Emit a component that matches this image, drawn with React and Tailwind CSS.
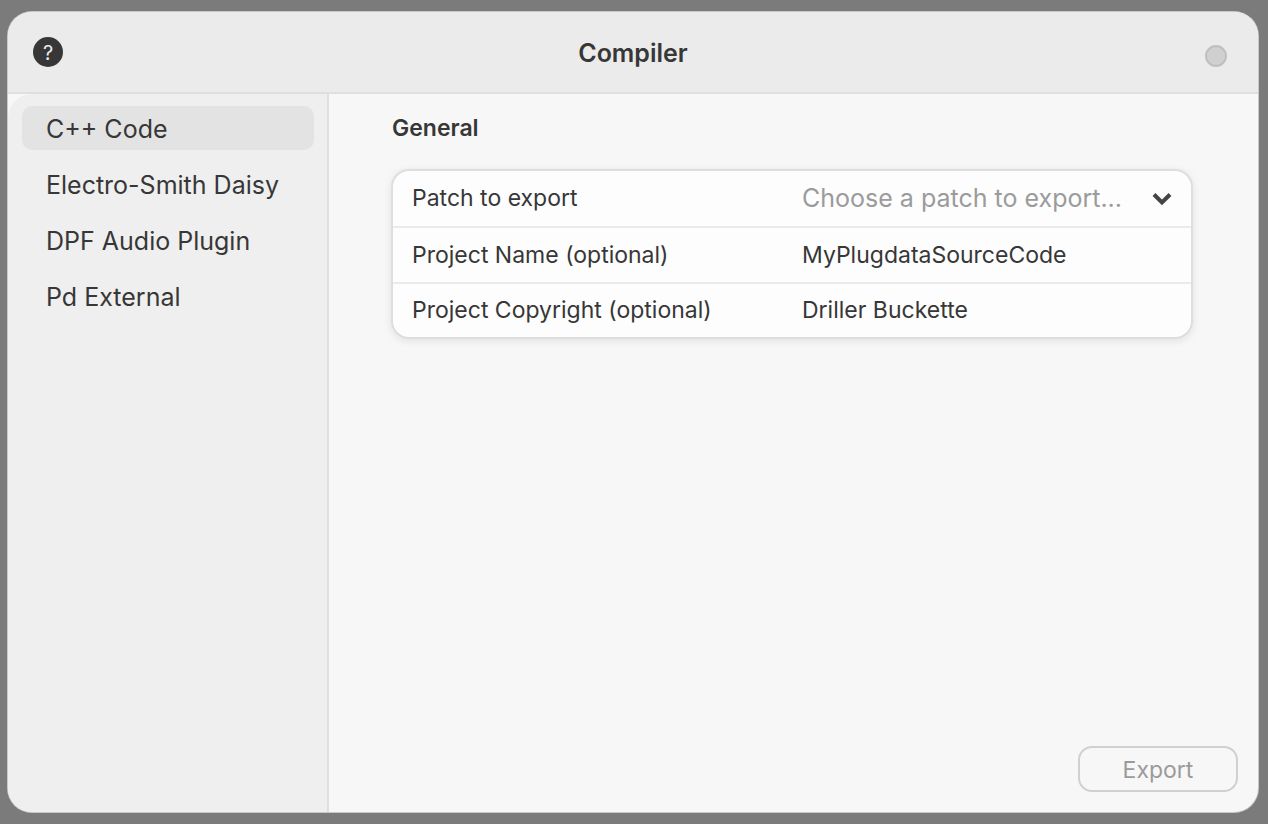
const items = ["C++ Code", "Electro-Smith Daisy", "DPF Audio Plugin", "Pd External"];

function Row({ id, label, children }) {
  return (
    <div className="grid h-14 grid-cols-[390px_1fr] items-center border-b-2 border-[#ebebeb] pl-[19px] first:h-[57px] last:h-[53px] last:border-b-0">
      <label htmlFor={id}>{label}</label>
      {children}
    </div>
  );
}

export default function App() {
  return (
    <div className="flex min-h-screen flex-col bg-[#7b7b7b] py-3 pr-[10px] pl-2 font-['Inter',sans-serif] text-[#373737]">
      <main className="flex flex-1 flex-col overflow-hidden rounded-[24px] bg-[#f7f7f7] shadow-[0_0_0_1px_#c8c8c8]">
        <header className="grid h-[82px] grid-cols-[1fr_auto_1fr] items-center border-b-2 border-[#dfdfdf] bg-[#ebebeb] px-[25px]">
          <button aria-label="Help" className="flex size-[30px] items-center justify-center rounded-full bg-[#373737] pt-0.5 text-xl text-[#ebebeb]">
            ?
          </button>
          <h1 className="pt-1 text-[25px] font-semibold">Compiler</h1>
          <button aria-label="Close" className="mt-2 mr-[6px] size-[22px] justify-self-end rounded-full border-2 border-[#bfbfbf] bg-[#d0d0d0]" />
        </header>
        <div className="flex flex-1">
          <nav className="flex w-[321px] shrink-0 flex-col gap-3 rounded-tl-[24px] border-r-2 border-[#dfdfdf] bg-[#efefef] pt-3 pr-[13px] pl-[14px]">
            {items.map((name, i) => (
              <button key={name} className={`h-11 rounded-[10px] pt-1 pl-6 text-left text-[25px] ${i === 0 ? "bg-[#e3e3e3]" : ""}`}>
                {name}
              </button>
            ))}
          </nav>
          <section className="flex flex-1 flex-col pt-[18px] pr-5 pb-5 pl-[62px]">
            <h2 className="pl-px text-[23px] leading-8 font-semibold">General</h2>
            <div className="mt-[25px] mr-[45px] overflow-hidden rounded-[18px] border-2 border-[#dedede] bg-[#fdfdfd] text-[23px] shadow-[0_2px_8px_rgba(0,0,0,0.09)]">
              <Row id="patch" label="Patch to export">
                <div className="grid items-center">
                  <select id="patch" className="col-start-1 row-start-1 w-full appearance-none bg-transparent pr-12 text-[25px] text-[#9b9b9b] outline-none">
                    <option>Choose a patch to export...</option>
                  </select>
                  <svg viewBox="0 0 20 14" className="pointer-events-none col-start-1 row-start-1 mr-[19px] h-[14px] w-5 justify-self-end" fill="none" stroke="#444444" strokeWidth="4">
                    <path d="M2 2.5 10 10.5 18 2.5" />
                  </svg>
                </div>
              </Row>
              <Row id="name" label="Project Name (optional)">
                <input id="name" defaultValue="MyPlugdataSourceCode" className="w-full bg-transparent outline-none" />
              </Row>
              <Row id="copyright" label="Project Copyright (optional)">
                <input id="copyright" defaultValue="Driller Buckette" className="w-full bg-transparent outline-none" />
              </Row>
            </div>
            <button disabled className="mt-auto h-[46px] w-40 self-end rounded-[14px] border-2 border-[#d0d0d0] pt-0.5 text-[23px] text-[#9b9b9b]">
              Export
            </button>
          </section>
        </div>
      </main>
    </div>
  );
}
